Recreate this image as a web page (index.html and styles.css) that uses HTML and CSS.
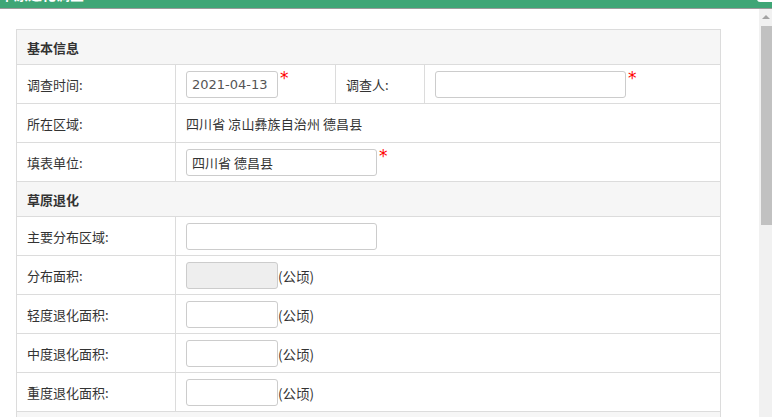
FILE: index.html
```html
<!DOCTYPE html>
<html lang="zh-CN">
<head>
<meta charset="utf-8">
<title>草原退化调查</title>
<link rel="stylesheet" href="styles.css">
</head>
<body>
<div class="titlebar">
  <span class="title-text">草原退化调查</span>
  <span class="close-btn"></span>
</div>
<div class="frame">
  <div class="content">
    <table class="form-table">
      <colgroup>
        <col class="c1"><col class="c2"><col class="c3"><col class="c4">
      </colgroup>
      <tr class="section"><td colspan="4">基本信息</td></tr>
      <tr>
        <td class="label">调查时间:</td>
        <td class="field"><input class="inp small" type="text" value="2021-04-13"><span class="req">*</span></td>
        <td class="label">调查人:</td>
        <td class="field"><input class="inp wide" type="text"><span class="req">*</span></td>
      </tr>
      <tr>
        <td class="label">所在区域:</td>
        <td class="field text" colspan="3">四川省 凉山彝族自治州 德昌县</td>
      </tr>
      <tr>
        <td class="label">填表单位:</td>
        <td class="field" colspan="3"><input class="inp wide" type="text" value="四川省 德昌县"><span class="req">*</span></td>
      </tr>
      <tr class="section"><td colspan="4">草原退化</td></tr>
      <tr>
        <td class="label">主要分布区域:</td>
        <td class="field" colspan="3"><input class="inp wide" type="text"></td>
      </tr>
      <tr>
        <td class="label">分布面积:</td>
        <td class="field" colspan="3"><input class="inp small" type="text" disabled><span class="unit">(公顷)</span></td>
      </tr>
      <tr>
        <td class="label">轻度退化面积:</td>
        <td class="field" colspan="3"><input class="inp small" type="text"><span class="unit">(公顷)</span></td>
      </tr>
      <tr>
        <td class="label">中度退化面积:</td>
        <td class="field" colspan="3"><input class="inp small" type="text"><span class="unit">(公顷)</span></td>
      </tr>
      <tr>
        <td class="label">重度退化面积:</td>
        <td class="field" colspan="3"><input class="inp small" type="text"><span class="unit">(公顷)</span></td>
      </tr>
      <tr class="section"><td colspan="4"></td></tr>
    </table>
  </div>
  <div class="scrollbar">
    <div class="arrow"></div>
    <div class="thumb"></div>
  </div>
</div>
</body>
</html>
```

FILE: styles.css
```css
html, body {
  margin: 0;
  padding: 0;
  background: #fff;
  overflow: hidden;
}
body {
  width: 772px;
  height: 417px;
  font-family: "Noto Sans CJK SC", "DejaVu Sans", sans-serif;
  font-size: 13px;
  color: #333;
}
.titlebar {
  height: 8px;
  background: #3fa676;
  border-bottom: 1px solid #9a9a9a;
  position: relative;
  overflow: hidden;
}
.title-text {
  position: absolute;
  left: 0;
  top: -13px;
  font-size: 14px;
  line-height: 14px;
  font-weight: bold;
  color: #fff;
}
.close-btn {
  position: absolute;
  left: 757px;
  top: -10px;
  width: 18px;
  height: 12px;
  background: #fff;
  border-radius: 3px;
}
.frame {
  display: flex;
  height: 408px;
}
.content {
  flex: 1;
  padding: 20px 0 0 16px;
  overflow: hidden;
}
.form-table {
  border-collapse: collapse;
  width: 704px;
  table-layout: fixed;
}
.c1 { width: 159px; }
.c2 { width: 160px; }
.c3 { width: 89px; }
.c4 { width: 296px; }
.form-table td {
  border: 1px solid #dcdcdc;
  padding: 0 10px;
  height: 39px;
  box-sizing: border-box;
  vertical-align: middle;
  white-space: nowrap;
}
.form-table tr.section td {
  background: #f6f6f6;
  font-weight: bold;
  height: 35px;
}
.field.text {
  letter-spacing: 0.1px;
}
.inp {
  box-sizing: border-box;
  height: 27px;
  border: 1px solid #ccc;
  border-radius: 3px;
  padding: 0 5px;
  font-family: "DejaVu Sans", "Noto Sans CJK SC", sans-serif;
  font-size: 13px;
  color: #555;
  background: #fff;
  vertical-align: middle;
  margin: 0;
  outline: none;
}
.inp.small { width: 92px; }
.inp.wide {
  width: 191px;
  font-family: "Noto Sans CJK SC", sans-serif;
  color: #333;
}
.inp:disabled {
  background: #eeeeee;
}
.req {
  color: #f00;
  font-family: "DejaVu Sans", sans-serif;
  font-size: 17px;
  line-height: 1;
  vertical-align: top;
  margin-left: 2px;
  position: relative;
  top: -1px;
}
.unit {
  vertical-align: middle;
  font-size: 13.5px;
}
.scrollbar {
  width: 13px;
  background: #f1f1f1;
  display: flex;
  flex-direction: column;
  align-items: flex-end;
}
.arrow {
  width: 0;
  height: 0;
  margin: 6px 2px 0 0;
  border-left: 4px solid transparent;
  border-right: 4px solid transparent;
  border-bottom: 4px solid #a3a3a3;
}
.thumb {
  width: 11px;
  height: 199px;
  margin-top: 7px;
  background: #c1c1c1;
}
```
